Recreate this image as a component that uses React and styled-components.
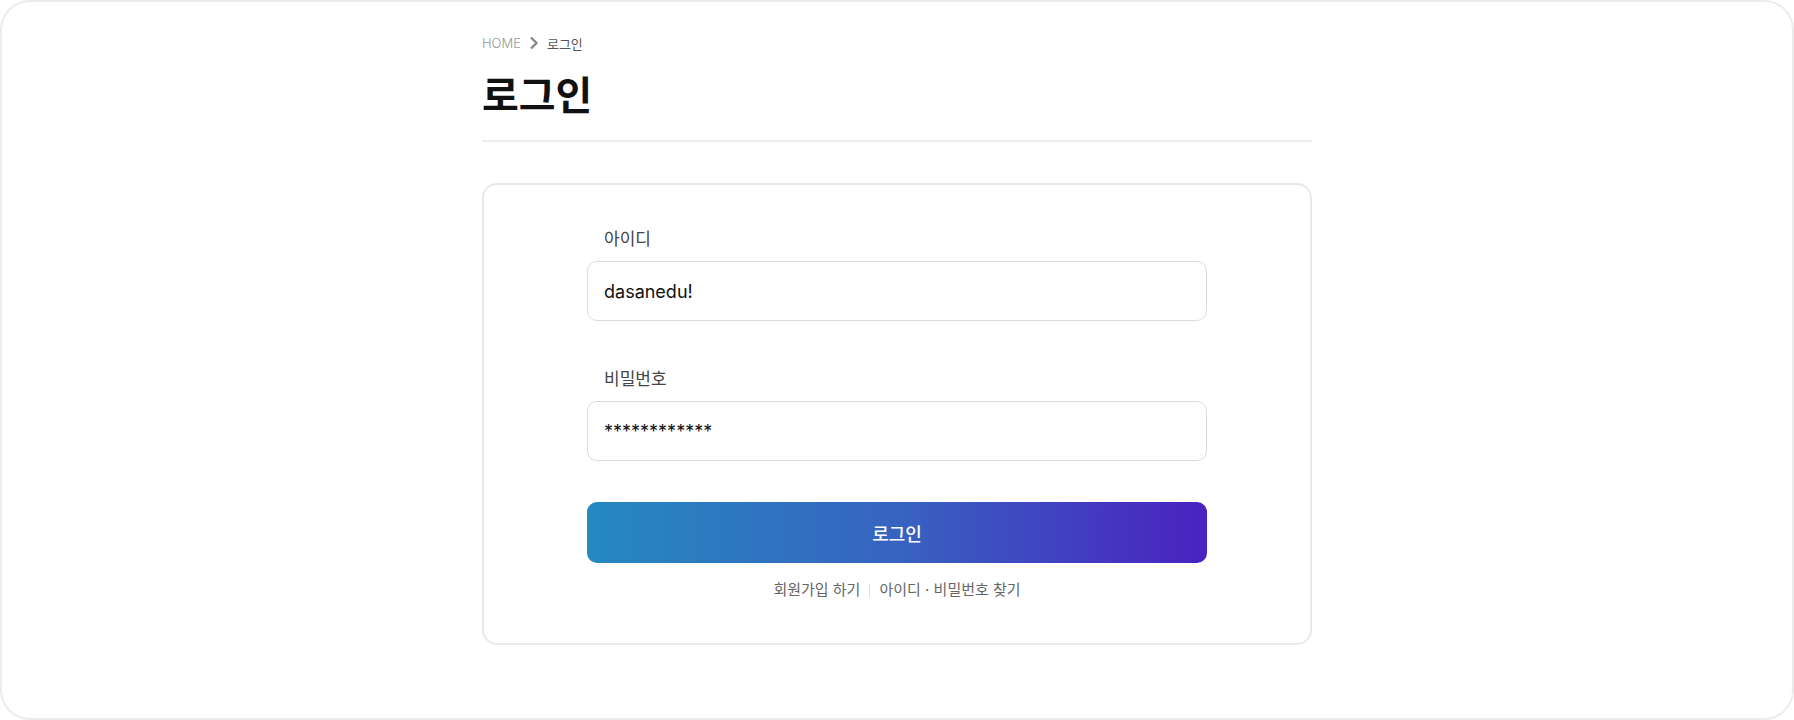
import React from 'react';
import styled, { createGlobalStyle } from 'styled-components';

const GlobalStyle = createGlobalStyle`
    * { box-sizing: border-box; }
    body {
        margin: 0;
        background: #fff;
        font-family: Inter, "Noto Sans CJK KR", sans-serif;
    }
`

const Frame = styled.div`
    height: 720px;
    border: 2px solid #ececec;
    border-radius: 30px;
    background: #fff;
`

const Content = styled.div`
    width: 830px;
    margin: 0 auto;
    padding-top: 32px;
`

const Breadcrumb = styled.nav`
    display: flex;
    align-items: center;
    gap: 8px;
    height: 18px;
    font-size: 13px;
`

const Crumb = styled.span`
    color: ${props => props.current ? '#555' : '#999'};
    font-weight: ${props => props.current ? 400 : 300};
`

const Title = styled.h1`
    margin: 22px 0 0;
    padding-bottom: 22px;
    font-size: 40px;
    line-height: 44px;
    font-weight: 700;
    color: #111;
    border-bottom: 2px solid #ededed;
`

const Card = styled.div`
    margin-top: 41px;
    border: 2px solid #e8e8e8;
    border-radius: 15px;
    padding: 42px 0 42px;
`

const Form = styled.form`
    width: 620px;
    margin: 0 auto;
    display: flex;
    flex-direction: column;
`

const Field = styled.div`
    display: flex;
    flex-direction: column;
    gap: 10px;
    margin-bottom: ${props => props.last ? '41px' : '46px'};
`

const Label = styled.label`
    padding-left: 17px;
    font-size: 17px;
    line-height: 24px;
    color: #444;
`

const Input = styled.input`
    height: 60px;
    border: 1px solid #dcdcdc;
    border-radius: 10px;
    padding: 0 16px;
    font-family: Inter, "Noto Sans CJK KR", sans-serif;
    font-size: 18px;
    color: #111;
    outline: none;
    background: #fff;
`

const Button = styled.button`
    height: 61px;
    border: none;
    border-radius: 10px;
    background: linear-gradient(90deg, #2589c0 0%, #3763c1 50%, #4a22c0 100%);
    color: #fff;
    font-family: Inter, "Noto Sans CJK KR", sans-serif;
    font-size: 18px;
    font-weight: 500;
    cursor: pointer;
`

const Links = styled.div`
    margin-top: 16px;
    display: flex;
    justify-content: center;
    align-items: center;
    gap: 9px;
    font-size: 15px;
    line-height: 22px;
    color: #666;
`

const Divider = styled.span`
    width: 1px;
    height: 13px;
    background: #ddd;
`

const Chevron = () => (
    <svg width="10" height="14" viewBox="0 0 10 14">
        <polyline points="2,1.5 7.5,7 2,12.5" fill="none" stroke="#888" strokeWidth="2.4" />
    </svg>
)

const App = () => (
    <>
        <GlobalStyle />
        <Frame>
            <Content>
                <Breadcrumb>
                    <Crumb>HOME</Crumb>
                    <Chevron />
                    <Crumb current>로그인</Crumb>
                </Breadcrumb>
                <Title>로그인</Title>
                <Card>
                    <Form onSubmit={e => e.preventDefault()}>
                        <Field>
                            <Label htmlFor="uid">아이디</Label>
                            <Input id="uid" type="text" defaultValue="dasanedu!" />
                        </Field>
                        <Field last>
                            <Label htmlFor="upw">비밀번호</Label>
                            <Input id="upw" type="text" defaultValue="************" />
                        </Field>
                        <Button type="submit">로그인</Button>
                        <Links>
                            <span>회원가입 하기</span>
                            <Divider />
                            <span>아이디 · 비밀번호 찾기</span>
                        </Links>
                    </Form>
                </Card>
            </Content>
        </Frame>
    </>
)

export default App;
